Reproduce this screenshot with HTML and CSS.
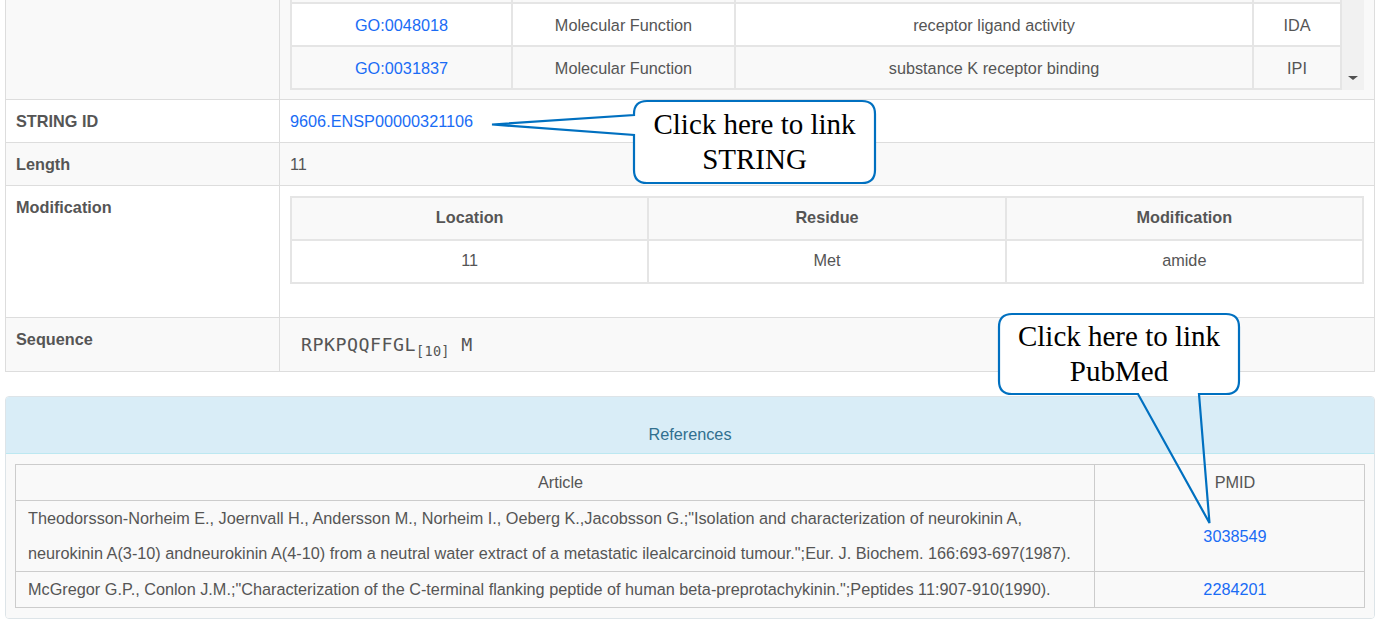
FILE: index.html
```html
<!DOCTYPE html>
<html lang="en">
<head>
<meta charset="utf-8">
<title>Peptide detail</title>
<link rel="stylesheet" href="styles.css">
</head>
<body>
<div class="page">
  <table class="detail">
    <colgroup><col class="col-label"><col></colgroup>
    <tbody>
      <tr>
        <th></th>
        <td class="go-cell">
          <div class="go-box">
            <div class="go-view">
              <table class="inner go">
                <colgroup><col class="go-c1"><col class="go-c2"><col class="go-c3"><col></colgroup>
                <tbody>
                  <tr><td><a href="#">GO:0005576</a></td><td>Cellular Component</td><td>extracellular region</td><td>IEA</td></tr>
                  <tr><td><a href="#">GO:0007217</a></td><td>Biological Process</td><td>tachykinin receptor signaling pathway</td><td>TAS</td></tr>
                  <tr><td><a href="#">GO:0007218</a></td><td>Biological Process</td><td>neuropeptide signaling pathway</td><td>IEA</td></tr>
                  <tr><td><a href="#">GO:0048018</a></td><td>Molecular Function</td><td>receptor ligand activity</td><td>IDA</td></tr>
                  <tr><td><a href="#">GO:0031837</a></td><td>Molecular Function</td><td>substance K receptor binding</td><td>IPI</td></tr>
                </tbody>
              </table>
            </div>
            <div class="go-scroll"><span class="go-arrow"></span></div>
          </div>
        </td>
      </tr>
      <tr>
        <th>STRING ID</th>
        <td><a href="#">9606.ENSP00000321106</a></td>
      </tr>
      <tr>
        <th>Length</th>
        <td>11</td>
      </tr>
      <tr>
        <th>Modification</th>
        <td>
          <table class="inner mod">
            <thead>
              <tr><th>Location</th><th>Residue</th><th>Modification</th></tr>
            </thead>
            <tbody>
              <tr><td>11</td><td>Met</td><td>amide</td></tr>
            </tbody>
          </table>
        </td>
      </tr>
      <tr>
        <th>Sequence</th>
        <td><div class="seq">RPKPQQFFGL<sub>[10]</sub> M</div></td>
      </tr>
    </tbody>
  </table>

  <div class="panel">
    <div class="panel-heading">References</div>
    <div class="panel-body">
      <table class="refs">
        <colgroup><col><col class="col-pmid"></colgroup>
        <thead>
          <tr><th>Article</th><th class="pmid">PMID</th></tr>
        </thead>
        <tbody>
          <tr>
            <td class="article">Theodorsson-Norheim E., Joernvall H., Andersson M., Norheim I., Oeberg K.,Jacobsson G.;"Isolation and characterization of neurokinin A, neurokinin A(3-10) andneurokinin A(4-10) from a neutral water extract of a metastatic ilealcarcinoid tumour.";Eur. J. Biochem. 166:693-697(1987).</td>
            <td class="pmid"><a href="#">3038549</a></td>
          </tr>
          <tr>
            <td class="article">McGregor G.P., Conlon J.M.;"Characterization of the C-terminal flanking peptide of human beta-preprotachykinin.";Peptides 11:907-910(1990).</td>
            <td class="pmid"><a href="#">2284201</a></td>
          </tr>
        </tbody>
      </table>
    </div>
  </div>

  <div class="callout callout-string">
    <svg class="callout-shape" width="390" height="90" viewBox="490 98 390 90" aria-hidden="true">
      <rect x="634" y="101" width="241" height="82" rx="13" fill="#fff"/>
      <path d="M634 115 V114 Q634 101 647 101 H862 Q875 101 875 114 V170 Q875 183 862 183 H647 Q634 183 634 170 V135 L492 124.5 Z" fill="none" stroke="#0070c0" stroke-width="2.2"/>
    </svg>
    <p class="callout-text">Click here to link<br>STRING</p>
  </div>

  <div class="callout callout-pubmed">
    <svg class="callout-shape" width="248" height="216" viewBox="996 311 248 216" aria-hidden="true">
      <rect x="999" y="314" width="240" height="80" rx="13" fill="#fff"/>
      <path d="M1138 394 H1012 Q999 394 999 381 V327 Q999 314 1012 314 H1226 Q1239 314 1239 327 V381 Q1239 394 1226 394 H1199 L1209.5 523 Z" fill="none" stroke="#0070c0" stroke-width="2.2"/>
    </svg>
    <p class="callout-text">Click here to link<br>PubMed</p>
  </div>
</div>
</body>
</html>
```

FILE: styles.css
```css
* { box-sizing: border-box; }

html, body {
  margin: 0;
  padding: 0;
  background: #fff;
}

body {
  font-family: "Liberation Sans", Arial, sans-serif;
  font-size: 16.25px;
  color: #555;
}

a {
  color: #1a6cf5;
  text-decoration: none;
}

.page {
  position: relative;
  display: flow-root;
  padding: 0 7px 0 5px;
}

/* ---------- detail table ---------- */
.detail {
  width: 1370px;
  border-collapse: collapse;
  table-layout: fixed;
  margin: -21px 0 24px;
}

.col-label { width: 274px; }

.detail > tbody > tr > th,
.detail > tbody > tr > td {
  border: 1px solid #ddd;
  padding: 10px 10px 10px;
  line-height: 22px;
  vertical-align: top;
  text-align: left;
  background: #fff;
}

.detail > tbody > tr:nth-child(odd) > th,
.detail > tbody > tr:nth-child(odd) > td {
  background: #f9f9f9;
}

.detail > tbody > tr > th { font-weight: bold; }

.detail > tbody > tr > td.go-cell { padding: 10px 10px 9px; }

/* GO scroll box */
.go-box {
  display: flex;
  height: 100px;
}

.go-view {
  flex: 1;
  min-width: 0;
  overflow: hidden;
  display: flex;
  flex-direction: column;
  justify-content: flex-end;
}

.go-scroll {
  width: 22px;
  background: #f1f1f1;
  display: flex;
  align-items: flex-end;
  justify-content: center;
}

.go-arrow {
  width: 0;
  height: 0;
  border-left: 5px solid transparent;
  border-right: 5px solid transparent;
  border-top: 4px solid #505050;
  margin-bottom: 10px;
}

/* inner tables */
.inner {
  width: 100%;
  border-collapse: collapse;
  table-layout: fixed;
}

.inner th,
.inner td {
  border: 2px solid #e5e5e5;
  padding: 11px 10px 9px;
  line-height: 21px;
  text-align: center;
  background: #fff;
}

.go-c1 { width: 221px; }
.go-c2 { width: 223px; }
.go-c3 { width: 518px; }

.go tbody tr:nth-child(odd) td { background: #f9f9f9; }

.mod { margin: 0 0 23px; }
.mod th,
.mod td { padding: 9px 10px 11px; }
.mod thead th {
  background: #f9f9f9;
  font-weight: bold;
}

/* sequence */
.seq {
  font-family: "DejaVu Sans Mono", "Liberation Mono", monospace;
  font-size: 18.3px;
  letter-spacing: 0.5px;
  line-height: 33px;
  padding-left: 11px;
  color: #555;
}

.seq sub {
  font-size: 13.5px;
  letter-spacing: 0.3px;
  vertical-align: -5px;
  line-height: 0;
}

/* ---------- references panel ---------- */
.panel {
  width: 1370px;
  border: 1px solid #dde4e8;
  border-radius: 4px;
  overflow: hidden;
}

.panel-heading {
  background: #d9edf7;
  color: #31708f;
  text-align: center;
  padding: 26px 15px 8px;
  line-height: 22px;
  border-bottom: 1px solid #bce8f1;
}

.panel-body {
  background: #f9f9f9;
  padding: 10px 9px;
}

.refs {
  width: 100%;
  border-collapse: collapse;
  table-layout: fixed;
}

.col-pmid { width: 270px; }

.refs th,
.refs td {
  border: 1px solid #ccc;
  padding: 0 1px 0 12px;
  line-height: 35px;
  font-weight: normal;
  text-align: center;
  vertical-align: middle;
}

.refs td.article { text-align: left; }

/* ---------- callouts ---------- */
.callout {
  position: absolute;
}

.callout-shape {
  display: block;
  position: absolute;
  left: 0;
  top: 0;
}

.callout-string {
  left: 490px;
  top: 98px;
  width: 390px;
  height: 90px;
}

.callout-pubmed {
  left: 996px;
  top: 311px;
  width: 248px;
  height: 216px;
}

.callout-text {
  position: absolute;
  margin: 0;
  display: flex;
  flex-direction: column;
  justify-content: center;
  text-align: center;
  font-family: "Liberation Serif", "Times New Roman", serif;
  font-size: 29px;
  line-height: 35px;
  color: #000;
}

.callout-string .callout-text {
  left: 144px;
  top: 3px;
  width: 241px;
  height: 82px;
}

.callout-pubmed .callout-text {
  left: 3px;
  top: 3px;
  width: 240px;
  height: 80px;
}
```
